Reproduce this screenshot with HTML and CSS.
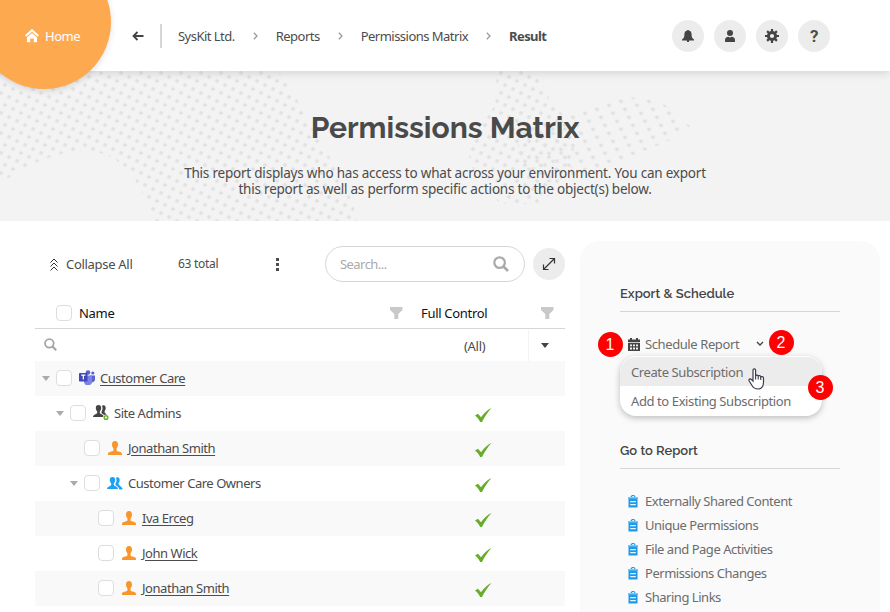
FILE: index.html
```html
<!DOCTYPE html>
<html lang="en">
<head>
<meta charset="utf-8">
<title>Permissions Matrix</title>
<link rel="stylesheet" href="styles.css">
</head>
<body>
<svg class="defs" width="0" height="0">
  <symbol id="person" viewBox="0 0 14 14"><path d="M7 0C4.900 0 4 1.500 4 3.500c0 1.600.6 2.900 1.400 3.800v2.200C4.800 10.700 0 10.300 0 13V14h14v-1C14 10.300 9.200 10.700 8.600 9.500V7.300C9.400 6.400 10 5.100 10 3.500 10 1.500 9.100 0 7 0z"/></symbol>
  <symbol id="group" viewBox="0 0 17 15"><path d="M5.500 0C3.600 0 2.800 1.300 2.800 3c0 1.500.7 2.700 1.400 3.400v1.500C3.600 9.300 0 9.300 0 12h11c0-2.700-3.600-2.700-4.200-4.100V6.400C7.500 5.700 8.200 4.500 8.200 3c0-1.700-.8-3-2.700-3z"/><path d="M8.900.8C9.400.4 9.800.2 10.400.2c1.600 0 2.300 1.200 2.300 2.800 0 1.300-.4 2.400-1.100 3.100v1.500l4.200 4-1.200.9h-2.300c-.2-2.300-1.800-3.300-3.800-4.300V6.600c1.200-1.500 1.500-4 .4-5.800z"/></symbol>
  <symbol id="check" viewBox="0 0 17 14"><path d="M0 7.500l3-1.800 3 3.500C9 5 12.500 1.800 16.500 0 12.800 4 9.800 8.500 7 14H5.200C3.800 11.300 2 9.200 0 7.500z"/></symbol>
  <symbol id="funnel" viewBox="0 0 13 12"><path d="M0 0h12.500v3L8.300 7v5H4.300V7L0 3z"/></symbol>
  <symbol id="lens" viewBox="0 0 16 16"><circle cx="6.600" cy="6.600" r="5.300" fill="none" stroke="currentColor" stroke-width="2.200"/><path d="M10.500 10.500L15 15" stroke="currentColor" stroke-width="2.700"/></symbol>
  <symbol id="clip" viewBox="0 0 10 13"><path d="M3 2.500a2 2 0 0 1 4 0" fill="none" stroke="#1b9bea" stroke-width="1.200"/><path fill="#7cc6f5" d="M0 2h10v2H0z"/><path fill="#1b9bea" d="M.5 3.500h9v9h-9z"/><path fill="#e8f5fd" d="M2.200 6h5.600v1.200H2.200zM2.200 9h5.600v1.200H2.200z"/></symbol>
  <symbol id="sep" viewBox="0 0 5 8"><path d="M.8.8L4 4 .8 7.200" fill="none" stroke="#9b9b9b" stroke-width="1.300"/></symbol>
</svg>

<header class="topbar">
  <a class="home">
    <svg width="14" height="14" viewBox="0 0 14 14"><path d="M.7 7L7 1.200 13.300 7" fill="none" stroke="#fff" stroke-width="2"/><path d="M2 8.500L7 4l5 4.500V13.300H8.700V9.500H5.300v3.800H2z" fill="#fff"/></svg>
    <span>Home</span>
  </a>
  <nav class="crumbs">
    <svg class="back" width="12" height="10" viewBox="0 0 12 10"><path d="M11.500 5H1.500M5.500 1L1.500 5l4 4" fill="none" stroke="#444" stroke-width="1.800"/></svg>
    <span class="bar"></span>
    <a>SysKit Ltd.</a><svg class="sep" width="5" height="8"><use href="#sep"/></svg>
    <a>Reports</a><svg class="sep" width="5" height="8"><use href="#sep"/></svg>
    <a>Permissions Matrix</a><svg class="sep" width="5" height="8"><use href="#sep"/></svg>
    <b>Result</b>
  </nav>
  <div class="tools">
    <span class="round"><svg width="12" height="12" viewBox="0 0 12 12"><path d="M5.200.6a.8.8 0 0 1 1.600 0C8.800 1 9.600 2.500 9.600 4.500c0 2.700.5 3.700 2.400 5v1H0v-1c1.900-1.300 2.400-2.300 2.400-5C2.400 2.500 3.200 1 5.200.6zM4.700 10.500h2.600L6.800 12H5.200z"/></svg></span>
    <span class="round"><svg width="10" height="12" viewBox="0 0 10 12"><circle cx="5" cy="3" r="3"/><path d="M0 12V9.800C0 8 2 6.800 3.300 6.800l1.700.7 1.700-.7C8 6.800 10 8 10 9.800V12z"/></svg></span>
    <span class="round"><svg width="14" height="14" viewBox="0 0 14 14"><circle cx="7" cy="7" r="3.600" fill="none" stroke="#444" stroke-width="3"/><path d="M7 0v3M7 11v3M0 7h3M11 7h3M2.100 2.100l2 2M9.900 9.900l2 2M11.900 2.100l-2 2M4.100 9.900l-2 2" stroke="#444" stroke-width="2.200"/></svg></span>
    <span class="round q">?</span>
  </div>
</header>

<section class="hero">
  <svg class="dots" viewBox="0 71 890 150">
    <defs>
      <pattern id="pa" width="8.944" height="8.944" patternUnits="userSpaceOnUse" patternTransform="translate(169 117) rotate(26.565) translate(-4.472 -4.472)"><circle cx="4.472" cy="4.472" r="1.900" fill="#e2e2e2"/></pattern>
      <pattern id="pb" width="12.650" height="8.850" patternUnits="userSpaceOnUse" patternTransform="translate(593 129.300) rotate(-18.430) skewX(8.100) translate(-6.325 -4.425)"><circle cx="6.325" cy="4.425" r="1.900" fill="#e2e2e2"/></pattern>
    </defs>
    <path fill="url(#pa)" d="M0 71H278C296 92 302 112 318 138 334 165 352 190 357 221H152C146 190 125 158 100 153 70 145 30 162 0 184z"/>
    <path fill="url(#pa)" d="M497 71H537L552 105 572 122 575 165 560 185 540 204H500L470 165 468 145 495 105z"/>
    <path fill="url(#pb)" d="M520 130C560 120 590 105 625 97 660 97 680 110 692 130 670 142 600 168 575 178 550 188 520 180 515 165z"/>
  </svg>
  <h1>Permissions Matrix</h1>
  <p>This report displays who has access to what across your environment. You can export<br>this report as well as perform specific actions to the object(s) below.</p>
</section>

<main>
  <section class="list">
    <div class="actions">
      <svg width="8" height="13" viewBox="0 0 8 13"><path d="M.5 4.500L4 1l3.500 3.500M.5 8.500L4 5l3.500 3.500M.5 12.500L4 9l3.500 3.500" fill="none" stroke="#333"/></svg>
      <span class="collapse">Collapse All</span>
      <span class="total">63 total</span>
      <span class="kebab"><i></i><i></i><i></i></span>
      <label class="search"><span>Search...</span><svg width="16" height="16"><use href="#lens"/></svg></label>
      <span class="round expand"><svg width="14" height="14" viewBox="0 0 14 14"><path d="M1.500 12.500l11-11M7.500 1.500h5v5M1.500 7.500v5h5" fill="none" stroke="#333" stroke-width="1.200"/></svg></span>
    </div>
    <div class="thead">
      <span class="box"></span><span class="name">Name</span>
      <svg width="13" height="12"><use href="#funnel"/></svg>
      <span class="full">Full Control</span>
      <svg width="13" height="12"><use href="#funnel"/></svg>
    </div>
    <div class="filter">
      <svg width="13" height="13"><use href="#lens"/></svg>
      <span class="all">(All)</span><span class="select"><i class="tri dark"></i></span>
    </div>
    <div class="row odd"><i class="tri"></i><span class="box"></span>
      <svg class="ico" width="16" height="15" viewBox="0 0 16 15"><circle cx="9" cy="2.500" r="2.300" fill="#5b62cf"/><circle cx="13.800" cy="3" r="1.600" fill="#5b62cf"/><path d="M11 5.500h5v4a3 3 0 0 1-4 2.600z" fill="#5b62cf"/><path d="M5 5.500h8v5a4 4 0 0 1-8 1.500z" fill="#7b83eb"/><rect y="3" width="8.500" height="8.500" rx=".8" fill="#4148b5"/><path d="M2.200 5.200h4.200M4.300 5.200v4.300" stroke="#fff" stroke-width="1.200"/></svg>
      <a>Customer Care</a></div>
    <div class="row in1"><i class="tri"></i><span class="box"></span>
      <svg class="ico dark" width="17" height="16" viewBox="0 0 17 16"><use href="#group" width="17" height="15"/><circle cx="13" cy="12.500" r="3" fill="#fff"/><circle cx="13" cy="12.500" r="1.800" fill="#fff" stroke="#6bb12c" stroke-width="1.500"/></svg>
      <span>Site Admins</span><svg class="tick" width="17" height="14"><use href="#check"/></svg></div>
    <div class="row odd in2"><i class="tri none"></i><span class="box"></span><svg class="ico user" width="14" height="14"><use href="#person"/></svg><a>Jonathan Smith</a><svg class="tick" width="17" height="14"><use href="#check"/></svg></div>
    <div class="row in2"><i class="tri"></i><span class="box"></span><svg class="ico blue" width="17" height="15"><use href="#group"/></svg><span>Customer Care Owners</span><svg class="tick" width="17" height="14"><use href="#check"/></svg></div>
    <div class="row odd in3"><i class="tri none"></i><span class="box"></span><svg class="ico user" width="14" height="14"><use href="#person"/></svg><a>Iva Erceg</a><svg class="tick" width="17" height="14"><use href="#check"/></svg></div>
    <div class="row in3"><i class="tri none"></i><span class="box"></span><svg class="ico user" width="14" height="14"><use href="#person"/></svg><a>John Wick</a><svg class="tick" width="17" height="14"><use href="#check"/></svg></div>
    <div class="row odd in3"><i class="tri none"></i><span class="box"></span><svg class="ico user" width="14" height="14"><use href="#person"/></svg><a>Jonathan Smith</a><svg class="tick" width="17" height="14"><use href="#check"/></svg></div>
  </section>

  <aside>
    <h2>Export &amp; Schedule</h2>
    <div class="schedule">
      <svg width="12" height="13" viewBox="0 0 12 13"><path d="M2 0h2v1.500h4V0h2v1.500h2V4H0V1.500h2zM0 4.800h12V13H0z" fill="#444"/><path d="M2 6.500h2v1.800H2zM5 6.500h2v1.800H5zM8 6.500h2v1.800H8zM2 9.600h2v1.800H2zM5 9.600h2v1.800H5zM8 9.600h2v1.800H8z" fill="#eee"/></svg>
      <span>Schedule Report</span>
      <svg width="8" height="6" viewBox="0 0 8 6"><path d="M1 1l3 3 3-3" fill="none" stroke="#444" stroke-width="1.400"/></svg>
      <div class="menu"><div class="item on">Create Subscription</div><div class="item">Add to Existing Subscription</div></div>
      <span class="badge b1">1</span><span class="badge b2">2</span><span class="badge b3">3</span>
      <svg class="hand" width="17" height="22" viewBox="0 0 17 22"><path d="M5 13V2.300C5 .4 7.600.4 7.600 2.300V8c.3-1.300 2.600-1.100 2.600.4.500-1.200 2.600-.9 2.600.7.600-1 2.700-.6 2.700 1V14c0 4-2 7-5.500 7-3 0-4.500-1-6-3.500L1.200 13c-.9-1.700 1-2.800 2.200-1.500z" fill="#fff" stroke="#3b3b4f" stroke-width="1.200"/><path d="M7.600 8v3.500M10.200 8.500v3M12.800 9.500v2.500" stroke="#3b3b4f" stroke-width="1.100"/></svg>
    </div>
    <h2 class="go">Go to Report</h2>
    <ul>
      <li><svg width="10" height="13"><use href="#clip"/></svg>Externally Shared Content</li>
      <li><svg width="10" height="13"><use href="#clip"/></svg>Unique Permissions</li>
      <li><svg width="10" height="13"><use href="#clip"/></svg>File and Page Activities</li>
      <li><svg width="10" height="13"><use href="#clip"/></svg>Permissions Changes</li>
      <li><svg width="10" height="13"><use href="#clip"/></svg>Sharing Links</li>
    </ul>
  </aside>
</main>
</body>
</html>
```
FILE: styles.css
```css
* { box-sizing: border-box; }
html { height: 612px; overflow: hidden; }
body { margin: 0; height: 612px; overflow: hidden; background: #fff; color: #4c4c4c; font: 13px/20px "Noto Sans", "Open Sans", sans-serif; letter-spacing: -.3px; white-space: nowrap; }
svg { display: block; flex: none; }
.defs { position: absolute; }
i { flex: none; }
.topbar { position: relative; z-index: 2; display: flex; align-items: center; height: 71px; background: #fff; box-shadow: 0 2px 9px rgba(0,0,0,.13); }
.home { position: absolute; left: -23px; top: -45px; width: 134px; height: 134px; border-radius: 50%; background: #fda94f; color: #fff; display: flex; gap: 6px; padding: 71px 0 0 48px; box-shadow: 0 2px 6px rgba(0,0,0,.12); }
.home svg { margin-top: 3px; }
.home span { letter-spacing: -.5px; }
.crumbs { display: flex; align-items: center; padding-left: 132px; letter-spacing: -.52px; }
.bar { width: 2px; height: 24px; background: #d6d6d6; margin: 0 16px; }
.sep { margin: 0 18px; }
.crumbs b { letter-spacing: -.6px; }
.tools { display: flex; gap: 10px; margin-left: auto; padding-right: 60px; }
.round { width: 32px; height: 32px; flex: none; border-radius: 50%; background: #ececec; display: flex; align-items: center; justify-content: center; }
.round svg { fill: #444; }
.q { font: 700 17px/32px Roboto, sans-serif; }
.hero { position: relative; height: 150px; background: #f3f3f3; text-align: center; }
.dots { position: absolute; inset: 0; width: 890px; height: 150px; }
h1 { position: relative; margin: 0; padding-top: 38px; font: 700 30px/38px Raleway, Lato, sans-serif; letter-spacing: 0; color: #4a4a4a; }
.hero p { position: relative; margin: 18px 0 0; font-size: 13.5px; line-height: 16px; letter-spacing: -.21px; }
main { display: flex; gap: 15px; padding-left: 35px; }
.list { width: 530px; height: 391px; }
.actions { display: flex; align-items: center; height: 36px; margin-top: 25px; padding-left: 15px; }
.collapse { width: 112px; margin-left: 8px; }
.total { width: 98px; font-size: 12px; }
.kebab { display: flex; flex-direction: column; gap: 2px; width: 3px; margin-right: 46px; }
.kebab i { width: 3px; height: 3px; background: #4c4c4c; }
.search { width: 200px; height: 36px; border: 1px solid #d6d6d6; border-radius: 18px; display: flex; align-items: center; justify-content: space-between; padding: 0 15px 0 14px; color: #aaa; letter-spacing: -.55px; }
.expand { margin-left: 8px; }
.thead { display: flex; align-items: center; height: 47px; border-bottom: 1px solid #d6d6d6; padding: 16px 0 0 21px; color: #111; }
.box { flex: none; width: 16px; height: 16px; border: 1px solid #ddd; border-radius: 4px; background: #fff; }
.name { margin-left: 7px; width: 311px; }
.thead svg { fill: #c9c9c9; }
.full { margin-left: 18px; width: 120px; }
.filter { display: flex; align-items: center; height: 32px; padding: 1px 0 0 9px; }
.filter svg { color: #a5a5a5; margin-top: -2px; }
.all { margin-left: 407px; width: 64px; }
.select { display: flex; align-items: center; justify-content: center; width: 33px; height: 31px; border-left: 1px solid #f3f3f3; }
.tri { width: 0; height: 0; border: 4px solid transparent; border-top: 5px solid #aaa; border-bottom: 0; }
.tri.dark { border-top-color: #444; }
.none { visibility: hidden; }
.row { position: relative; display: flex; align-items: center; height: 35px; padding: 0 0 2px 7px; letter-spacing: -.46px; }
.row .tri { margin-top: 2px; }
.odd { background: #f9f9f9; }
.in1 { padding-left: 21px; }
.in2 { padding-left: 35px; }
.in3 { padding-left: 49px; }
.row .box { margin: 0 7px 0 6px; }
.ico { margin-right: 5px; }
.user { fill: #f9962b; margin: 0 6px 0 1px; }
.blue, .ico.dark { margin-right: 4px; }
.blue { fill: #1ba1f2; margin-top: 4px; }
.ico.dark { fill: #444; }
.row a { text-decoration: underline; text-underline-offset: 2px; }
.tick { position: absolute; left: 440px; top: 12px; fill: #67ac2b; }
aside { width: 300px; height: 380px; margin-top: 20px; padding: 41px 40px 0; border-radius: 20px 20px 0 0; background: #fafafa; color: #6c6c6c; }
h2 { margin: 0; height: 30px; border-bottom: 1px solid #d6d6d6; font: 600 13px/24px Raleway, Lato, sans-serif; letter-spacing: 0; color: #444; }
.schedule { position: relative; display: flex; align-items: center; height: 20px; margin-top: 22px; padding-left: 8px; letter-spacing: -.4px; }
.schedule > span:not(.badge) { margin-left: 5px; width: 111px; }
.menu { position: absolute; left: 0; top: 22px; width: 202px; height: 60px; border-radius: 16px; background: #fff; overflow: hidden; border-top: 1px solid #fff; box-shadow: 0 2px 6px rgba(0,0,0,.25); }
.item { height: 29px; line-height: 31px; padding-left: 11px; }
.on { background: #ececec; }
.badge { position: absolute; width: 25px; height: 25px; border-radius: 50%; background: #f00; color: #fff; text-align: center; font: 16px/25px "Liberation Sans", sans-serif; letter-spacing: 0; }
.b1 { left: -22.500px; top: -2px; }
.b2 { left: 148.500px; top: -4px; }
.b3 { left: 187.500px; top: 41px; }
.hand { position: absolute; left: 128px; top: 34px; }
.go { margin-top: 85px; }
ul { list-style: none; margin: 20px 0 0; padding: 0 0 0 8px; letter-spacing: -.47px; }
li { display: flex; align-items: center; gap: 7px; height: 24px; }
```
